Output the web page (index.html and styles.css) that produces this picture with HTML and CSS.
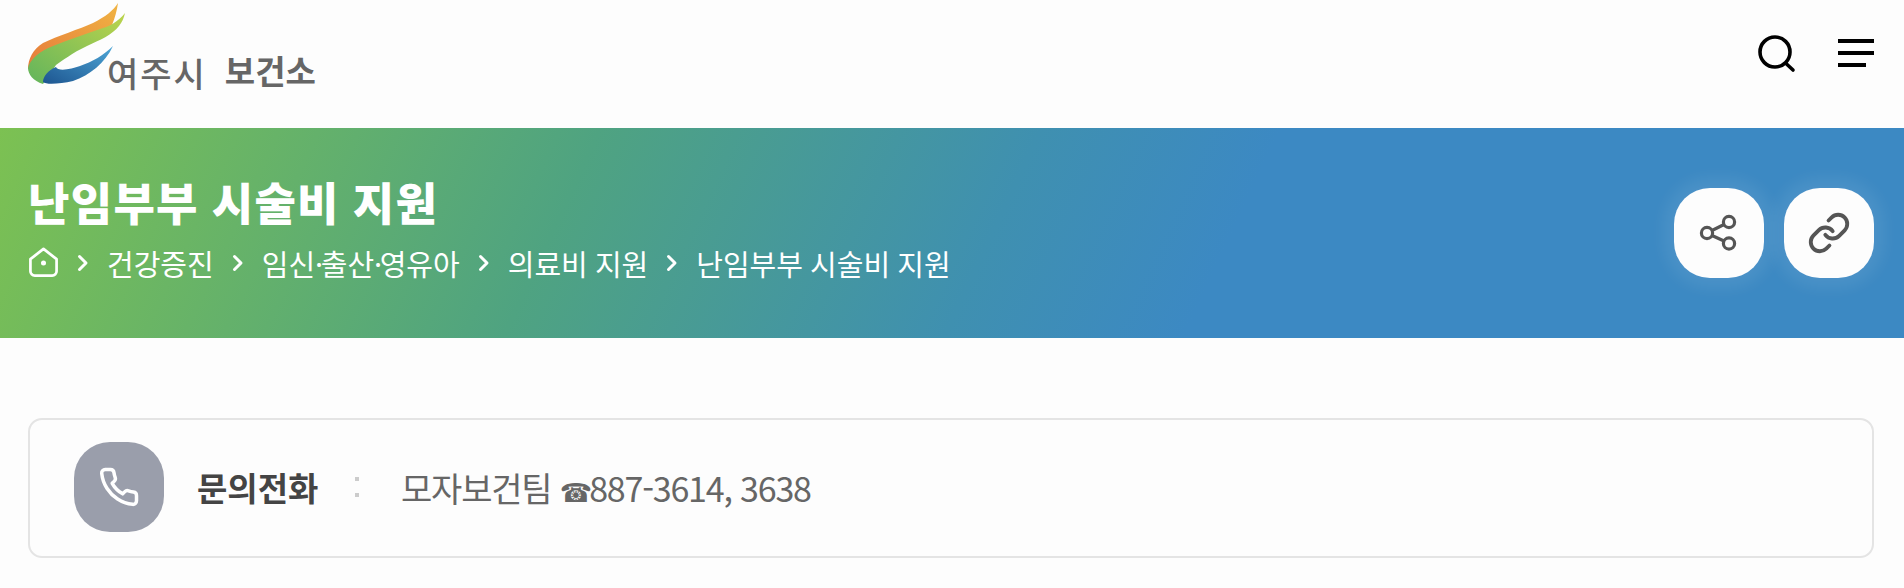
FILE: index.html
```html
<!DOCTYPE html>
<html lang="ko">
<head>
    <meta charset="UTF-8">
    <meta name="viewport" content="width=device-width, initial-scale=1.0">
    <title>난임부부 시술비 지원</title>
    <link rel="stylesheet" href="styles.css">
</head>
<body>
    <header class="top">
        <a class="logo" href="#">
            <svg class="logo-mark" width="100" height="86" viewBox="28 0 100 86">
                <defs>
                    <linearGradient id="lg-orange" x1="0" y1="1" x2="1" y2="0">
                        <stop offset="0" stop-color="#e67a3a"/>
                        <stop offset="1" stop-color="#f0b443"/>
                    </linearGradient>
                    <linearGradient id="lg-green" x1="0" y1="1" x2="1" y2="0">
                        <stop offset="0" stop-color="#62b45c"/>
                        <stop offset="1" stop-color="#bcd44c"/>
                    </linearGradient>
                    <linearGradient id="lg-blue" x1="0" y1="1" x2="1" y2="0">
                        <stop offset="0" stop-color="#1d5590"/>
                        <stop offset="1" stop-color="#4da6d6"/>
                    </linearGradient>
                </defs>
                <path fill="url(#lg-orange)" d="M118 2C114 9 105 16 93 22C80 28 57 35 43 42C33 48 28 58 28 68L60 50L112 24C115 17 117 9 118 2Z"/>
                <path fill="url(#lg-green)" d="M125 12C118 21 108 26 100 28C85 33 68 39 53 45C40 50 30 58 28 67C28 73 33 80 43 83L56 64C62 60 72 52 87 45C100 39 112 34 119 25C122 21 124 17 125 12Z"/>
                <path fill="url(#lg-blue)" d="M113 45C104 54 92 61 80 65C72 68 58 71 56 66C48 69 43 76 43 81C46 84 60 83 73 80C90 74 105 62 113 45Z"/>
            </svg>
            <span class="logo-city">여주시</span>
            <span class="logo-part">보건소</span>
        </a>
        <div class="top-tools">
            <svg class="search-icon" width="42" height="42" viewBox="0 0 42 42" fill="none" stroke="#000" stroke-width="3.6" stroke-linecap="round">
                <circle cx="19" cy="18" r="15"/>
                <path d="M30 29.5L37 36"/>
            </svg>
            <div class="menu-btn">
                <span></span>
                <span></span>
                <span class="short"></span>
            </div>
        </div>
    </header>

    <section class="banner">
        <div class="banner-text">
            <h1>난임부부 시술비 지원</h1>
            <nav class="crumbs">
                <svg width="31" height="31" viewBox="0 0 32 32" fill="none" stroke="#fff" stroke-width="2.8" stroke-linejoin="round">
                    <path d="M2.5 12.5L16 2L29.5 12.5V25A4.5 4.5 0 0 1 25 29.5H7A4.5 4.5 0 0 1 2.5 25Z"/>
                    <circle cx="16" cy="16.5" r="2.6" fill="#fff" stroke="none"/>
                </svg>
                <svg class="chev" width="12" height="18" viewBox="0 0 12 18" fill="none" stroke="#fff" stroke-width="3" stroke-linecap="round" stroke-linejoin="round"><path d="M2.5 2.5L9 9L2.5 15.5"/></svg>
                <span>건강증진</span>
                <svg class="chev" width="12" height="18" viewBox="0 0 12 18" fill="none" stroke="#fff" stroke-width="3" stroke-linecap="round" stroke-linejoin="round"><path d="M2.5 2.5L9 9L2.5 15.5"/></svg>
                <span>임신<span class="mid">·</span>출산<span class="mid">·</span>영유아</span>
                <svg class="chev" width="12" height="18" viewBox="0 0 12 18" fill="none" stroke="#fff" stroke-width="3" stroke-linecap="round" stroke-linejoin="round"><path d="M2.5 2.5L9 9L2.5 15.5"/></svg>
                <span>의료비 지원</span>
                <svg class="chev" width="12" height="18" viewBox="0 0 12 18" fill="none" stroke="#fff" stroke-width="3" stroke-linecap="round" stroke-linejoin="round"><path d="M2.5 2.5L9 9L2.5 15.5"/></svg>
                <span>난임부부 시술비 지원</span>
            </nav>
        </div>
        <div class="banner-btns">
            <button class="round-btn">
                <svg width="90" height="90" viewBox="0 0 90 90" fill="none" stroke="#555" stroke-width="3.2">
                    <circle cx="55" cy="34" r="5.6"/>
                    <circle cx="33" cy="45" r="5.6"/>
                    <circle cx="55" cy="55.5" r="5.6"/>
                    <path d="M38 42.5L50 36.5M38 47.5L50 53"/>
                </svg>
            </button>
            <button class="round-btn">
                <svg width="44" height="44" viewBox="0 0 24 24" fill="none" stroke="#555" stroke-width="2.1" stroke-linecap="round" stroke-linejoin="round">
                    <path d="M10 13a5 5 0 0 0 7.54.54l3-3a5 5 0 0 0-7.07-7.07l-1.72 1.71"/>
                    <path d="M14 11a5 5 0 0 0-7.54-.54l-3 3a5 5 0 0 0 7.07 7.07l1.71-1.71"/>
                </svg>
            </button>
        </div>
    </section>

    <main class="content">
        <div class="contact">
            <div class="contact-icon">
                <svg width="42" height="42" viewBox="0 0 24 24" fill="none" stroke="#fff" stroke-width="2" stroke-linecap="round" stroke-linejoin="round">
                    <path d="M22 16.92v3a2 2 0 0 1-2.18 2 19.79 19.79 0 0 1-8.63-3.07 19.5 19.5 0 0 1-6-6 19.79 19.79 0 0 1-3.07-8.67A2 2 0 0 1 4.11 2h3a2 2 0 0 1 2 1.72 12.84 12.84 0 0 0 .7 2.81 2 2 0 0 1-.45 2.11L8.09 9.91a16 16 0 0 0 6 6l1.27-1.27a2 2 0 0 1 2.11-.45 12.84 12.84 0 0 0 2.81.7A2 2 0 0 1 22 16.92z"/>
                </svg>
            </div>
            <strong class="contact-label">문의전화</strong>
            <span class="contact-sep"></span>
            <span class="contact-value">모자보건팀 <span class="tel-mark">☎</span>887-3614, 3638</span>
        </div>
    </main>
</body>
</html>
```

FILE: styles.css
```css
* {
    box-sizing: border-box;
}

body {
    margin: 0;
    background-color: #fdfdfd;
    font-family: "Noto Sans CJK KR", "Noto Sans", sans-serif;
}

h1 {
    margin: 0;
}

.top {
    display: flex;
    justify-content: space-between;
    height: 128px;
    padding: 0 30px 0 28px;
}

.logo {
    display: flex;
    align-items: flex-start;
    text-decoration: none;
    color: #666;
    line-height: 1;
}

.logo-mark {
    flex: none;
    margin-top: 1px;
}

.logo-city {
    margin: 56px 0 0 -21px;
    font-size: 34px;
    font-weight: 500;
    letter-spacing: 2px;
}

.logo-part {
    margin: 54px 0 0 18px;
    font-size: 33px;
    font-weight: 700;
}

.top-tools {
    display: flex;
    align-items: flex-start;
    gap: 40px;
    padding-top: 35px;
}

.search-icon {
    margin-top: -1px;
}

.menu-btn {
    display: flex;
    flex-direction: column;
    gap: 8px;
    width: 36px;
    padding-top: 4px;
}

.menu-btn span {
    display: block;
    height: 4px;
    background-color: #000;
}

.menu-btn .short {
    width: 28px;
}

.banner {
    display: flex;
    justify-content: space-between;
    align-items: center;
    height: 210px;
    padding: 0 30px 0 28px;
    background: linear-gradient(115deg, #7cc152 0%, #4fa381 30%, #3f90b0 52%, #3c89c3 64%, #3c89c3 100%);
    color: #fff;
}

.banner-text {
    margin-bottom: 12px;
}

.banner h1 {
    font-size: 45px;
    font-weight: 800;
    line-height: 60px;
    letter-spacing: 1.3px;
    word-spacing: -1px;
}

.crumbs {
    display: flex;
    align-items: center;
    gap: 18px;
    margin-top: 11px;
    font-size: 29px;
    line-height: 40px;
    word-spacing: -1px;
}

.mid {
    letter-spacing: -2.5px;
}

.chev {
    flex: none;
}

.banner-btns {
    display: flex;
    gap: 20px;
}

.round-btn {
    display: flex;
    align-items: center;
    justify-content: center;
    width: 90px;
    height: 90px;
    padding: 0;
    border: 0;
    border-radius: 36px;
    background-color: #fdfdfd;
    box-shadow: 0 0 16px 10px rgba(255, 255, 255, 0.08);
}

.content {
    padding: 80px 30px 0 28px;
}

.contact {
    display: flex;
    align-items: center;
    height: 140px;
    padding: 0 0 2px 44px;
    border: 2px solid #e4e4e4;
    border-radius: 14px;
}

.contact-icon {
    display: flex;
    align-items: center;
    justify-content: center;
    width: 90px;
    height: 90px;
    margin-right: 33px;
    border-radius: 36px;
    background-color: #9a9eab;
}

.contact-label {
    width: 158px;
    font-size: 33px;
    font-weight: 700;
    color: #444;
}

.contact-sep {
    width: 4px;
    height: 20px;
    margin-right: 42px;
    background: linear-gradient(#ccc 0, #ccc 4px, transparent 4px, transparent 16px, #ccc 16px);
}

.contact-value {
    font-size: 34px;
    color: #666;
    letter-spacing: -1.2px;
}

.tel-mark {
    font-family: "DejaVu Sans", sans-serif;
    font-size: 26px;
    font-weight: 700;
    letter-spacing: -3px;
}
```
